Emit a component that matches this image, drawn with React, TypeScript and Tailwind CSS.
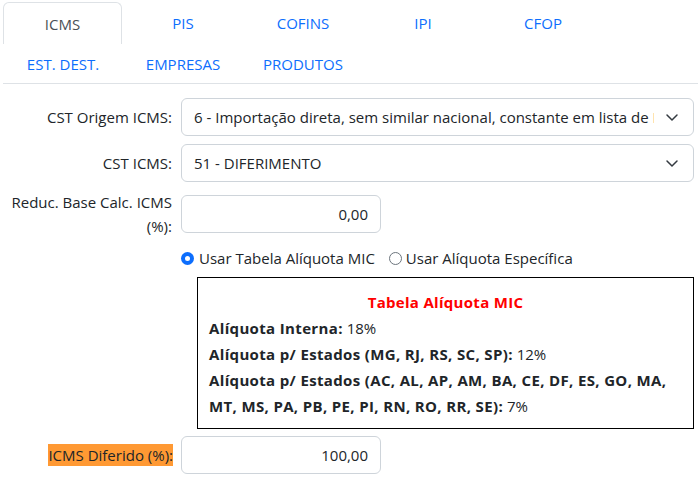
import React from 'react';

const tabsRow1 = ['ICMS', 'PIS', 'COFINS', 'IPI', 'CFOP'];
const tabsRow2 = ['EST. DEST.', 'EMPRESAS', 'PRODUTOS'];

function Chevron() {
    return (
        <svg width="16" height="16" viewBox="0 0 16 16" className="shrink-0">
            <path d="m3 6 5 5 5-5" fill="none" stroke="#343a40" strokeWidth="1.5" strokeLinecap="round" strokeLinejoin="round" />
        </svg>
    );
}

function Select({ value }: { value: string }) {
    return (
        <div className="flex-1 min-w-0 h-[38px] border border-[#ced4da] rounded-[6px] flex items-center pl-[12px] pr-[13px] bg-white">
            <span className="flex-1 min-w-0 overflow-hidden whitespace-nowrap text-[#212529]">{value}</span>
            <div className="w-[10px] shrink-0" />
            <Chevron />
        </div>
    );
}

function Radio({ checked }: { checked?: boolean }) {
    return checked ? (
        <span className="w-[13px] h-[13px] rounded-full bg-[#0d6efd] flex items-center justify-center shrink-0">
            <span className="w-[5px] h-[5px] rounded-full bg-white" />
        </span>
    ) : (
        <span className="block w-[13px] h-[13px] rounded-full border border-[#6c757d] bg-white shrink-0" />
    );
}

export default function App() {
    return (
        <div className="w-[698px] h-[479px] overflow-hidden bg-white text-[#212529] text-[15px] leading-[24px]" style={{ fontFamily: '"Segoe UI", "Open Sans", sans-serif' }}>
            {/* Tabs */}
            <div className="ml-[3px] pt-[2px] border-b border-[#dee2e6]">
                <div className="flex">
                    {tabsRow1.map((t, i) => (
                        <div
                            key={t}
                            className={`h-[42px] flex items-center justify-center ${i === 0 ? 'w-[119px] mr-[1px] border border-b-0 border-[#dee2e6] rounded-t-[6px] text-[#495057]' : 'w-[120px] text-[#0d6efd]'}`}
                        >
                            {t}
                        </div>
                    ))}
                </div>
                <div className="flex">
                    {tabsRow2.map((t) => (
                        <div key={t} className="w-[120px] h-[39px] flex items-center justify-center text-[#0d6efd]">
                            {t}
                        </div>
                    ))}
                </div>
            </div>

            {/* Form */}
            <div className="pr-[4px] pt-[14px]">
                <div className="flex items-center">
                    <label className="w-[181px] pr-[9px] text-right shrink-0">CST Origem ICMS:</label>
                    <Select value="6 - Importação direta, sem similar nacional, constante em lista de Resolução CAMEX e gás natural" />
                </div>
                <div className="flex items-center mt-[8px]">
                    <label className="w-[181px] pr-[9px] text-right shrink-0">CST ICMS:</label>
                    <Select value="51 - DIFERIMENTO" />
                </div>
                <div className="flex items-center mt-[1px] py-[7px]">
                    <label className="w-[181px] pr-[9px] pl-[10px] text-right shrink-0">Reduc. Base Calc. ICMS (%):</label>
                    <div className="w-[200px] h-[38px] border border-[#ced4da] rounded-[6px] flex items-center justify-end px-[12px]">0,00</div>
                </div>

                <div className="flex items-center ml-[181px] mt-[1px] h-[24px]">
                    <Radio checked />
                    <span className="ml-[5px]">Usar Tabela Alíquota MIC</span>
                    <span className="ml-[14px] flex items-center"><Radio /></span>
                    <span className="ml-[4px]">Usar Alíquota Específica</span>
                </div>

                <div className="ml-[197px] mt-[7px] w-[497px] border border-black px-[11px] pt-[11px] pb-[9px] leading-[26px]">
                    <div className="text-center text-[#ff0000] font-bold tracking-[0.3px]">Tabela Alíquota MIC</div>
                    <div><b className="tracking-[0.35px]">Alíquota Interna:</b> 18%</div>
                    <div><b className="tracking-[0.35px]">Alíquota p/ Estados (MG, RJ, RS, SC, SP):</b> 12%</div>
                    <div><b className="tracking-[0.35px]">Alíquota p/ Estados (AC, AL, AP, AM, BA, CE, DF, ES, GO, MA, MT, MS, PA, PB, PE, PI, RN, RO, RR, SE):</b> 7%</div>
                </div>

                <div className="flex items-center mt-[7px]">
                    <div className="w-[181px] pr-[8px] text-right shrink-0">
                        <span className="bg-[#ff9933] py-[1px]">ICMS Diferido (%):</span>
                    </div>
                    <div className="w-[200px] h-[38px] border border-[#ced4da] rounded-[6px] flex items-center justify-end px-[12px]">100,00</div>
                </div>
            </div>
        </div>
    );
}
